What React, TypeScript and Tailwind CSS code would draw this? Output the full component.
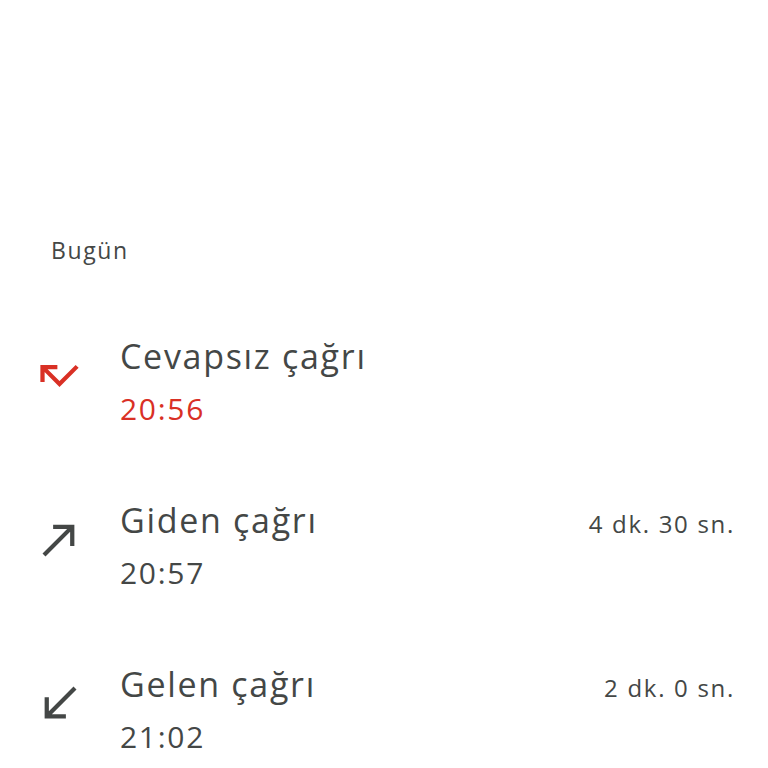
const font = { fontFamily: '"Open Sans", "Noto Sans", sans-serif' }

type Call = {
  kind: 'missed' | 'outgoing' | 'incoming'
  title: string
  time: string
  duration?: string
}

const calls: Call[] = [
  { kind: 'missed', title: 'Cevapsız çağrı', time: '20:56' },
  { kind: 'outgoing', title: 'Giden çağrı', time: '20:57', duration: '4 dk. 30 sn.' },
  { kind: 'incoming', title: 'Gelen çağrı', time: '21:02', duration: '2 dk. 0 sn.' },
]

function CallIcon({ kind }: { kind: Call['kind'] }) {
  const d =
    kind === 'missed'
      ? 'M19.59 7L12 14.59 6.41 9H11V7H3v8h2v-4.59l7 7 9-9z'
      : kind === 'outgoing'
        ? 'M9 5v2h6.59L4 18.59 5.41 20 17 8.41V15h2V5z'
        : 'M20 5.41L18.59 4 7 15.59V9H5v10h10v-2H8.41z'
  return (
    <svg
      viewBox="0 0 24 24"
      className={
        kind === 'missed'
          ? 'w-[51px] h-[51px] shrink-0 mt-[16px] fill-[#d93025]'
          : 'w-[51px] h-[51px] shrink-0 mt-[16px] fill-[#444746]'
      }
    >
      <path d={d} />
    </svg>
  )
}

export default function App() {
  return (
    <div className="min-h-[768px] bg-white pt-[234px]" style={font}>
      <h2 className="pl-[51px] text-[23px] leading-[32px] tracking-[1.6px] text-[#444746]">Bugün</h2>

      <div className="mt-[68px] flex flex-col gap-[69px]">
        {calls.map((c) => (
          <div key={c.time} className="flex items-start gap-[35px] pl-[34px] pr-[33px]">
            <CallIcon kind={c.kind} />
            <div className="flex-1">
              <div className="flex h-[44px] items-baseline justify-between">
                <span className="text-[34px] leading-[44px] tracking-[1.7px] text-[#444746]">{c.title}</span>
                {c.duration && (
                  <span className="text-[24px] leading-[24px] tracking-[1.7px] text-[#444746]">{c.duration}</span>
                )}
              </div>
              <div
                className={
                  c.kind === 'missed'
                    ? 'mt-[11px] text-[30px] leading-[40px] tracking-[1.7px] text-[#d93025]'
                    : 'mt-[11px] text-[30px] leading-[40px] tracking-[1.7px] text-[#444746]'
                }
              >
                {c.time}
              </div>
            </div>
          </div>
        ))}
      </div>
    </div>
  )
}
